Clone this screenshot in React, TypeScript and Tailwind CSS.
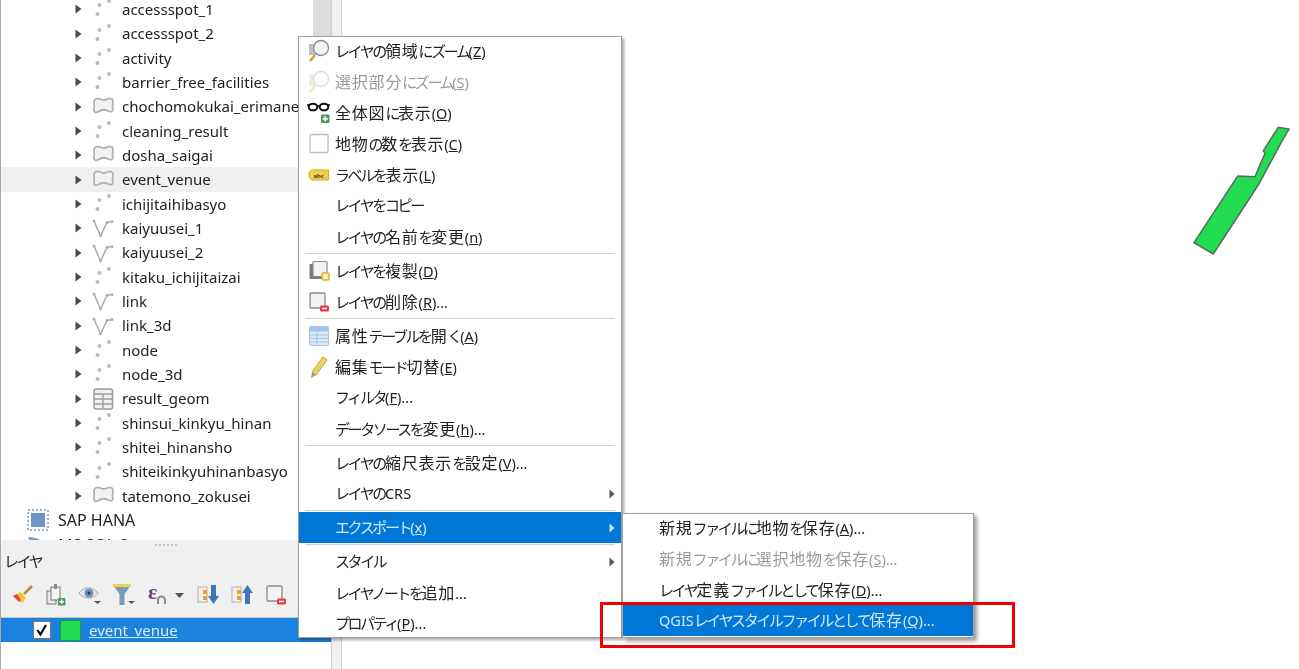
import React from 'react';

type Kind = 'point' | 'poly' | 'line' | 'table';

const layers: [string, Kind][] = [
  ['accessspot_1', 'point'],
  ['accessspot_2', 'point'],
  ['activity', 'point'],
  ['barrier_free_facilities', 'point'],
  ['chochomokukai_erimane', 'poly'],
  ['cleaning_result', 'point'],
  ['dosha_saigai', 'poly'],
  ['event_venue', 'poly'],
  ['ichijitaihibasyo', 'point'],
  ['kaiyuusei_1', 'line'],
  ['kaiyuusei_2', 'line'],
  ['kitaku_ichijitaizai', 'point'],
  ['link', 'line'],
  ['link_3d', 'line'],
  ['node', 'point'],
  ['node_3d', 'point'],
  ['result_geom', 'table'],
  ['shinsui_kinkyu_hinan', 'point'],
  ['shitei_hinansho', 'point'],
  ['shiteikinkyuhinanbasyo', 'point'],
  ['tatemono_zokusei', 'poly'],
];

const LayerKindIcon = ({ kind }: { kind: Kind }) => (
  <svg width="22" height="22" viewBox="0 0 22 22" className="shrink-0">
    {kind === 'point' && (
      <g fill="#bcbcbc">
        <circle cx="17" cy="3" r="2" />
        <circle cx="7.500" cy="7" r="2" />
        <circle cx="5.500" cy="16" r="2" />
      </g>
    )}
    {kind === 'poly' && (
      <path
        d="M2 7C1.500 3 5 1.500 8 3C11 4.500 14 4 16 2.800C19 1.500 21.500 3 21 7C20.800 9.500 20 10.500 20.800 12.500C21.500 15.500 19 16.500 16 15C13 13.500 9 13.500 6.500 15.500C3.500 17.500 1.500 16 2 13C2.500 11 2.300 9 2 7z"
        fill="#f2f2f2"
        stroke="#b2b2b2"
        strokeWidth="1.800"
      />
    )}
    {kind === 'line' && (
      <g>
        <path d="M2 4l6.500 15L15 5.500l5-1" fill="none" stroke="#aaaaaa" strokeWidth="1.500" />
        <g fill="#b0b0b0">
          <circle cx="2" cy="4" r="1.500" />
          <circle cx="8.500" cy="18.500" r="1.500" />
          <circle cx="15" cy="5.500" r="1.500" />
          <circle cx="20" cy="4.500" r="1.500" />
        </g>
      </g>
    )}
    {kind === 'table' && (
      <g>
        <rect x="2" y="1" width="18.500" height="20" rx="2" fill="#f1f1f1" stroke="#9c9c9c" strokeWidth="1.500" />
        <path d="M2.500 6h17.500M2.500 11h17.500M2.500 16h17.500M11 6v15" stroke="#9c9c9c" strokeWidth="1.300" />
      </g>
    )}
  </svg>
);

const TreeArrow = () => (
  <svg width="7" height="10" viewBox="0 0 7 10" className="shrink-0">
    <path d="M0.500 0.500L6.500 5L0.500 9.500z" fill="#4a4a4a" />
  </svg>
);

const Magnifier = ({ faded }: { faded?: boolean }) => (
  <svg width="22" height="24" viewBox="0 0 22 24" className={faded ? 'opacity-30' : ''}>
    <rect x="1" y="5" width="11" height="11" rx="1" fill="#c0c0c0" />
    <path d="M2 22l5-6" stroke="#d9a520" strokeWidth="2.500" />
    <circle cx="13" cy="9" r="7.500" fill="#f3f3f3" stroke="#8d8d8d" strokeWidth="1.300" />
  </svg>
);

const Glasses = () => (
  <svg width="24" height="24" viewBox="0 0 24 24">
    <ellipse cx="6" cy="6" rx="4.300" ry="3.300" fill="#fff" stroke="#111" strokeWidth="2" />
    <ellipse cx="17" cy="6" rx="4.300" ry="3.300" fill="#fff" stroke="#111" strokeWidth="2" />
    <path d="M10 5h3M0 4l2 0M23 4l-2 0" stroke="#111" strokeWidth="1.500" />
    <rect x="14" y="13.500" width="8.500" height="8.500" rx="1" fill="#4c9a5c" />
    <path d="M18.200 15.300v5M15.800 17.800h5" stroke="#fff" strokeWidth="1.800" />
  </svg>
);

const EmptyBox = () => (
  <svg width="22" height="22" viewBox="0 0 22 22">
    <rect x="2" y="1.500" width="18" height="18" rx="1" fill="#fff" stroke="#bdbdbd" strokeWidth="1.300" />
  </svg>
);

const LabelTag = () => (
  <svg width="22" height="14" viewBox="0 0 22 14">
    <path d="M3.500 2H20.500V12H3.500L1 9V5z" fill="#f0d04a" stroke="#d2a91f" strokeWidth="1" />
    <text x="5.500" y="9.800" fontSize="7" fontWeight="700" fontFamily="Liberation Serif, serif" fill="#333">abc</text>
  </svg>
);

const DuplicateLayer = () => (
  <svg width="22" height="22" viewBox="0 0 22 22">
    <rect x="1.500" y="4" width="15" height="15" rx="1" fill="#7c7c72" />
    <rect x="5" y="1.500" width="14" height="15" rx="1" fill="#f3f3f3" stroke="#8a8a8a" strokeWidth="1.200" />
    <rect x="14" y="13" width="7" height="7" rx="1" fill="#f4f0c0" stroke="#d8b628" strokeWidth="1.500" />
  </svg>
);

const RemoveLayer = () => (
  <svg width="22" height="22" viewBox="0 0 22 22">
    <rect x="2" y="2" width="15" height="15" rx="1" fill="#f3f3f3" stroke="#8a8a8a" strokeWidth="1.300" />
    <rect x="12" y="14.500" width="9" height="6" rx="1.500" fill="#e63946" />
    <path d="M14 17.500h5" stroke="#fff" strokeWidth="1.500" />
  </svg>
);

const AttrTable = () => (
  <svg width="22" height="22" viewBox="0 0 22 22">
    <rect x="1.500" y="1.500" width="19" height="19" rx="1.500" fill="#dbe8f5" stroke="#a9c7e4" strokeWidth="1.200" />
    <rect x="2" y="2" width="18" height="4.500" fill="#a3c4e4" />
    <path d="M2 10h18M2 13.500h18M2 17h18M9 6.500v14" stroke="#a9c7e4" strokeWidth="1.100" />
  </svg>
);

const Pencil = () => (
  <svg width="22" height="24" viewBox="0 0 22 24">
    <path d="M15 2l4 3L8 20l-4-3z" fill="#e9d55c" stroke="#b9a53a" strokeWidth="1" />
    <path d="M4 17l4 3-5 3z" fill="#9a9a9a" />
  </svg>
);

// kanji run wide, kana run narrow, like the proportional UI font in the shot
const jp = (text: string) =>
  text.split(/([\u4e00-\u9fff]+|[\u3040-\u30ff]+)/).map((part, i) => {
    if (/^[\u4e00-\u9fff]/.test(part))
      return (
        <span key={i} className="text-[16px] tracking-[0.800px]">
          {part}
        </span>
      );
    if (/^[\u3040-\u30ff]/.test(part))
      return (
        <span key={i} className="text-[15px] tracking-[-2.400px]">
          {part}
        </span>
      );
    return <span key={i}>{part}</span>;
  });

type Item = { label: React.ReactNode; icon?: React.ReactNode; disabled?: boolean; arrow?: boolean; active?: boolean };

const mn = (before: string, key?: string, after = '') => (
  <>
    {jp(before)}
    {key && (
      <>
        (<span className="underline">{key}</span>){after}
      </>
    )}
  </>
);

const MenuArrow = ({ light }: { light?: boolean }) => (
  <svg width="6" height="10" viewBox="0 0 6 10" className="absolute right-[6px]">
    <path d="M0.500 0.500L5.500 5L0.500 9.500z" fill={light ? '#cfe3f7' : '#555'} />
  </svg>
);

const MenuRow = ({ item, sub }: { item: Item; sub?: boolean }) => (
  <div
    className={`${sub ? 'h-[30.700px]' : 'h-[31px]'} flex items-center relative ${item.active ? 'bg-[#0078d7] text-[#d5e8f9]' : item.disabled ? 'text-[#9a9a9a]' : 'text-[#222222]'}`}
  >
    <div className="w-[36px] pl-[3px] flex items-center justify-center shrink-0">{item.icon}</div>
    <span className="whitespace-nowrap">{item.label}</span>
    {item.arrow && <MenuArrow light={item.active} />}
  </div>
);

const Sep = () => (
  <div className="h-[3px] flex items-center px-[6px]">
    <div className="h-[1px] w-full bg-[#cfcfcf]" />
  </div>
);

const groups: Item[][] = [
  [
    { label: mn('レイヤの領域にズーム', 'Z'), icon: <Magnifier /> },
    { label: mn('選択部分にズーム', 'S'), icon: <Magnifier faded />, disabled: true },
    { label: mn('全体図に表示', 'O'), icon: <Glasses /> },
    { label: mn('地物の数を表示', 'C'), icon: <EmptyBox /> },
    { label: mn('ラベルを表示', 'L'), icon: <LabelTag /> },
    { label: mn('レイヤをコピー') },
    { label: mn('レイヤの名前を変更', 'n') },
  ],
  [
    { label: mn('レイヤを複製', 'D'), icon: <DuplicateLayer /> },
    { label: mn('レイヤの削除', 'R', '...'), icon: <RemoveLayer /> },
  ],
  [
    { label: mn('属性テーブルを開く', 'A'), icon: <AttrTable /> },
    { label: mn('編集モード切替', 'E'), icon: <Pencil /> },
    { label: mn('フィルタ', 'F', '...') },
    { label: mn('データソースを変更', 'h', '...') },
  ],
  [
    { label: mn('レイヤの縮尺表示を設定', 'V', '...') },
    { label: mn('レイヤのCRS'), arrow: true },
  ],
  [{ label: mn('エクスポート', 'x'), arrow: true, active: true }],
  [
    { label: mn('スタイル'), arrow: true },
    { label: <>{jp('レイヤノートを追加')}...</> },
    { label: mn('プロパティ', 'P', '...') },
  ],
];

const subItems: Item[] = [
  { label: mn('新規ファイルに地物を保存', 'A', '...') },
  { label: mn('新規ファイルに選択地物を保存', 'S', '...'), disabled: true },
  { label: mn('レイヤ定義ファイルとして保存', 'D', '...') },
  { label: mn('QGISレイヤスタイルファイルとして保存', 'Q', '...'), active: true },
];

const Toolbar = () => (
  <div className="h-[40px] pb-[4px] flex items-center pl-[11px] gap-[12px]">
    {/* style brush */}
    <svg width="22" height="22" viewBox="0 0 22 22">
      <path d="M1 12l8-4 5 6-4 5z" fill="#f0c63c" />
      <path d="M1 12l4-2 4 6-2 2z" fill="#e0483c" />
      <path d="M12 10l8-8" stroke="#b68a3e" strokeWidth="2.500" />
    </svg>
    {/* add group */}
    <svg width="22" height="24" viewBox="0 0 22 24" className="-ml-[2px]">
      <rect x="3" y="8" width="9" height="13" fill="#e8e8e8" stroke="#777" />
      <rect x="7" y="4" width="9" height="13" fill="#f3f3f3" stroke="#777" />
      <rect x="10" y="1" width="3" height="5" fill="#888" />
      <rect x="14" y="15" width="7.500" height="7.500" rx="1" fill="#4c9a5c" />
      <path d="M17.700 16.500v4.500M15.500 18.700h4.500" stroke="#fff" strokeWidth="1.500" />
    </svg>
    {/* visibility */}
    <svg width="24" height="22" viewBox="0 0 24 22">
      <path d="M1 9c5-7 14-7 19 0-5 7-14 7-19 0z" fill="#e7e7e7" stroke="#aaa" />
      <circle cx="11" cy="9" r="4.500" fill="#6d8fbd" />
      <circle cx="11" cy="9" r="1.600" fill="#27364d" />
      <path d="M16 17h7l-3.500 3z" fill="#555" />
    </svg>
    {/* filter */}
    <svg width="24" height="24" viewBox="0 0 24 24" className="-ml-[2px]">
      <path d="M1 2h18l-6.500 9v11h-5V11z" fill="#7a9bb8" />
      <rect x="1" y="1" width="18" height="3" fill="#ead34d" />
      <path d="M16 18h7l-3.500 3z" fill="#555" />
    </svg>
    {/* expression */}
    <div className="flex items-center gap-[6px] -ml-[1px]">
      <svg width="22" height="24" viewBox="0 0 22 24" className="overflow-visible">
        <text x="1" y="16" fontSize="22" fontWeight="700" fontFamily="Liberation Serif, serif" fill="#6b3e86">ε</text>
        <path d="M11 21v-4a3.500 3.500 0 0 1 7 0v4" fill="none" stroke="#8a8a8a" strokeWidth="2" />
      </svg>
      <svg width="9" height="5" viewBox="0 0 9 5">
        <path d="M0 0h9L4.500 5z" fill="#555" />
      </svg>
    </div>
    {/* expand all */}
    <svg width="22" height="22" viewBox="0 0 22 22" className="ml-[1px]">
      <rect x="1" y="3" width="9" height="15" fill="none" stroke="#b0b0b0" />
      <rect x="6" y="6" width="4" height="4" fill="#f0a030" />
      <rect x="6" y="12" width="4" height="4" fill="#f0a030" />
      <path d="M14 1h5v11h3l-5.500 8-5.500-8h3z" fill="#3c78b4" />
    </svg>
    {/* collapse all */}
    <svg width="22" height="22" viewBox="0 0 22 22">
      <rect x="1" y="3" width="9" height="15" fill="none" stroke="#b0b0b0" />
      <rect x="6" y="6" width="4" height="4" fill="#f0a030" />
      <rect x="6" y="12" width="4" height="4" fill="#f0a030" />
      <path d="M14 20h5v-11h3l-5.500-8-5.500 8h3z" fill="#3c78b4" />
    </svg>
    <RemoveLayer />
  </div>
);

const App: React.FC = () => (
  <div className="relative w-[1299px] h-[669px] overflow-hidden bg-white flex text-[#222222] text-[14.500px] blur-[0.500px] font-['Noto_Sans','Noto_Sans_CJK_JP',sans-serif]">
    {/* left column */}
    <div className="w-[331px] h-full flex flex-col shrink-0 border-l border-[#a8a8a8]">
      <div className="h-[540px] flex overflow-hidden">
        <div className="flex-1 min-w-0 text-[15px]">
          <div className="-mt-[3px]">
            {layers.map(([name, kind]) => (
              <div
                key={name}
                className={`h-[24.350px] flex items-center pl-[74px] ${name === 'event_venue' ? 'bg-[#f0f0f0]' : ''}`}
              >
                <TreeArrow />
                <div className="ml-[10px] mr-[8px] flex">
                  <LayerKindIcon kind={kind} />
                </div>
                <span className="whitespace-nowrap">{name}</span>
              </div>
            ))}
            <div className="h-[24.350px] flex items-center pl-[25px] text-[16px]">
              <svg width="24" height="24" viewBox="0 0 24 24" className="shrink-0">
                <rect x="2" y="2" width="20" height="20" fill="none" stroke="#7f9cc4" strokeWidth="1.500" strokeDasharray="2 2" />
                <rect x="5" y="5" width="14" height="14" fill="#6f93c4" />
              </svg>
              <span className="ml-[8px]">SAP HANA</span>
            </div>
            <div className="h-[24.350px] flex items-center pl-[25px] text-[16px]">
              <svg width="24" height="24" viewBox="0 0 24 24" className="shrink-0">
                <path d="M2 4c8 0 16 3 20 12L8 18z" fill="#7f9cc4" />
              </svg>
              <span className="ml-[8px]">MS SQL Server</span>
            </div>
          </div>
        </div>
        <div className="w-[18px] shrink-0 bg-[#f0f0f0] border-x border-[#d8d8d8]">
          <div className="h-[60px] bg-[#dcdcdc]" />
        </div>
      </div>

      {/* layers panel */}
      <div className="flex-1 bg-[#f0f0f0] flex flex-col">
        <div className="h-[6px] flex justify-center items-end">
          <div className="w-[22px] border-t-2 border-dotted border-[#c4c4c4]" />
        </div>
        <div className="h-[31px] flex items-center pl-[3px]">{jp('レイヤ')}</div>
        <Toolbar />
        <div className="flex-1 bg-white border-t border-[#c8c8c8]">
          <div className="h-[24px] bg-[#1a82dc] flex items-center pl-[32px] text-[15px]">
            <div className="w-[18px] h-[18px] bg-white border border-[#777] flex items-center justify-center">
              <svg width="14" height="14" viewBox="0 0 14 14">
                <path d="M2.500 7l3 4.500L11 2" fill="none" stroke="#000" strokeWidth="2.200" />
              </svg>
            </div>
            <div className="ml-[9px] w-[21px] h-[21px] bg-[#22dd52] border border-[#1a9a3c]" />
            <span className="ml-[8px] text-[#d9ecfb] underline">event_venue</span>
          </div>
        </div>
      </div>
    </div>

    {/* splitter strip */}
    <div className="w-[11px] h-full shrink-0 bg-[#f0f0f0] border-x border-[#d0d0d0]" />

    {/* map canvas */}
    <div className="relative flex-1">
      <svg width="129" height="160" viewBox="0 0 129 160" className="absolute left-[828px] top-[110px]">
        <path
          d="M24 132.700L67.700 66L85 66.700L95 43.300L93.300 40.700L108.300 17.300L119 19L111.700 31.700L88.300 75L43.300 144z"
          fill="#22dd52"
          stroke="#5a6a5e"
          strokeWidth="1.500"
        />
      </svg>
    </div>

    {/* context menu */}
    <div className="absolute left-[298px] top-[36px] w-[324px] h-[602px] bg-white border border-[#a0a0a0] shadow-[2px_2px_3px_rgba(0,0,0,0.35)]">
      <div className="-mt-[2px]">
        {groups.map((group, i) => (
          <React.Fragment key={i}>
            {i > 0 && <Sep />}
            {group.map((item, j) => (
              <MenuRow key={j} item={item} />
            ))}
          </React.Fragment>
        ))}
      </div>
    </div>

    {/* export submenu */}
    <div className="absolute left-[622px] top-[513px] w-[352px] h-[125px] bg-white border border-[#a0a0a0] shadow-[3px_3px_4px_rgba(0,0,0,0.4)]">
      <div className="-mt-[1px]">
        {subItems.map((item, j) => (
          <MenuRow key={j} item={item} sub />
        ))}
      </div>
    </div>

    {/* red annotation */}
    <div className="absolute left-[600px] top-[602px] w-[415px] h-[46px] border-[3px] border-[#f00000]" />
  </div>
);

export default App;
